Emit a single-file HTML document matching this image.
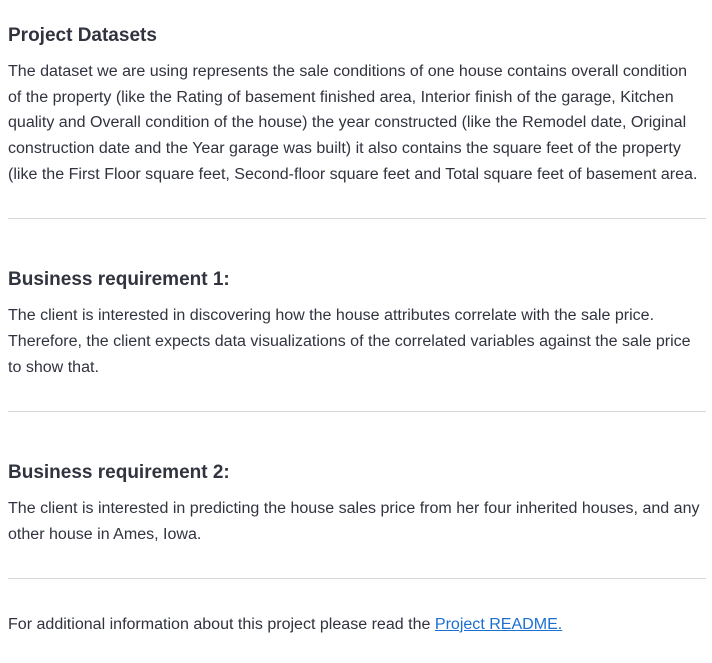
<!DOCTYPE html>
<html><head><meta charset="utf-8"><style>
body{margin:0;width:712px;height:663px;background:#fff;font-family:"Liberation Sans",sans-serif;color:#31333F;position:relative;overflow:hidden}
.l{position:absolute;left:8px;white-space:nowrap;font-size:16.05px;line-height:20px}
.h{position:absolute;left:8px;white-space:nowrap;font-size:19px;font-weight:bold;line-height:26px}
.hr{position:absolute;left:8px;width:698px;height:1px;background:#d6d6d9}
a{color:#1c6fd1;text-decoration:underline}
</style></head><body>
<div class="h" style="top:23px">Project Datasets</div>
<div class="l" style="top:61px">The dataset we are using represents the sale conditions of one house contains overall condition</div>
<div class="l" style="top:87px">of the property (like the Rating of basement finished area, Interior finish of the garage, Kitchen</div>
<div class="l" style="top:112px">quality and Overall condition of the house) the year constructed (like the Remodel date, Original</div>
<div class="l" style="top:138px">construction date and the Year garage was built) it also contains the square feet of the property</div>
<div class="l" style="top:164px">(like the First Floor square feet, Second-floor square feet and Total square feet of basement area.</div>
<div class="hr" style="top:218px"></div>
<div class="h" style="top:267px">Business requirement 1:</div>
<div class="l" style="top:305px">The client is interested in discovering how the house attributes correlate with the sale price.</div>
<div class="l" style="top:331px">Therefore, the client expects data visualizations of the correlated variables against the sale price</div>
<div class="l" style="top:357px">to show that.</div>
<div class="hr" style="top:411px"></div>
<div class="h" style="top:460px">Business requirement 2:</div>
<div class="l" style="top:498px">The client is interested in predicting the house sales price from her four inherited houses, and any</div>
<div class="l" style="top:524px">other house in Ames, Iowa.</div>
<div class="hr" style="top:578px"></div>
<div class="l" style="top:614px">For additional information about this project please read the <a>Project README.</a></div>
</body></html>
